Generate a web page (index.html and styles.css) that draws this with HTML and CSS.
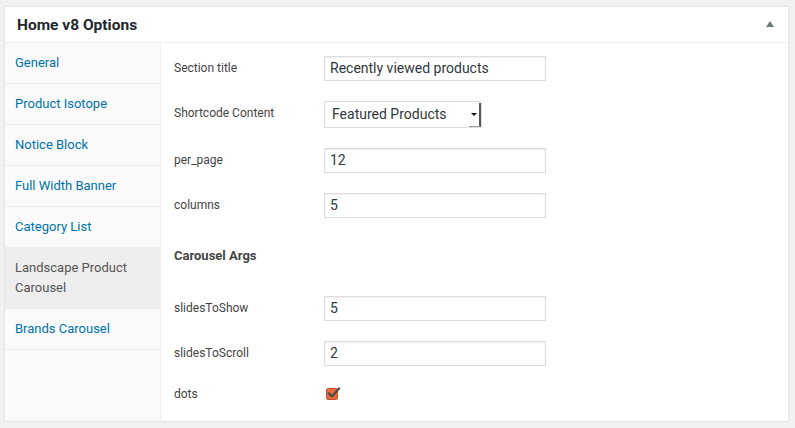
FILE: index.html
```html
<!DOCTYPE html>
<html>
<head>
<meta charset="utf-8">
<link rel="stylesheet" href="styles.css">
</head>
<body>
<div class="panel">
  <div class="panel-head">
    <h2 class="panel-title">Home v8 Options</h2>
    <span class="toggle"></span>
  </div>
  <div class="panel-body">
    <ul class="tabs">
      <li class="tab"><a>General</a></li>
      <li class="tab"><a>Product Isotope</a></li>
      <li class="tab"><a>Notice Block</a></li>
      <li class="tab"><a>Full Width Banner</a></li>
      <li class="tab"><a>Category List</a></li>
      <li class="tab active"><a>Landscape Product Carousel</a></li>
      <li class="tab"><a>Brands Carousel</a></li>
    </ul>
    <div class="fields">
      <div class="row">
        <label class="lbl">Section title</label>
        <div class="input">Recently viewed products</div>
      </div>
      <div class="row">
        <label class="lbl">Shortcode Content</label>
        <div class="select"><span class="sel-text">Featured Products</span><span class="sel-btn"><span class="caret"></span></span></div>
      </div>
      <div class="row">
        <label class="lbl">per_page</label>
        <div class="input">12</div>
      </div>
      <div class="row">
        <label class="lbl">columns</label>
        <div class="input">5</div>
      </div>
      <h3 class="group">Carousel Args</h3>
      <div class="row">
        <label class="lbl">slidesToShow</label>
        <div class="input">5</div>
      </div>
      <div class="row">
        <label class="lbl">slidesToScroll</label>
        <div class="input">2</div>
      </div>
      <div class="row row-check">
        <label class="lbl">dots</label>
        <span class="check">
          <svg width="15" height="14" viewBox="0 0 15 14"><path d="M3 7.5 L6 10.5 L13 2.5" fill="none" stroke="#4a4a4a" stroke-width="2.2" stroke-linecap="square"/></svg>
        </span>
      </div>
    </div>
  </div>
</div>
</body>
</html>
```

FILE: styles.css
```css
html, body {
  margin: 0;
  padding: 0;
  background: #f1f1f1;
  font-family: Roboto, "Liberation Sans", sans-serif;
}
body {
  padding: 6px 6px 0 4px;
}
.panel {
  background: #fff;
  border: 1px solid #e5e5e5;
  box-shadow: 0 1px 1px rgba(0,0,0,.04);
  display: flex;
  flex-direction: column;
  height: 416px;
  box-sizing: border-box;
}
.panel-head {
  height: 35px;
  border-bottom: 1px solid #eee;
  display: flex;
  align-items: center;
  justify-content: space-between;
  padding: 0 14px 0 12px;
}
.panel-title {
  margin: 0;
  font-size: 15.5px;
  font-weight: 700;
  color: #23282d;
  line-height: 20px;
}
.toggle {
  width: 0;
  height: 0;
  border-left: 4px solid transparent;
  border-right: 4px solid transparent;
  border-bottom: 6px solid #72777c;
  margin-top: -2px;
}
.panel-body {
  flex: 1;
  display: flex;
}
.tabs {
  list-style: none;
  margin: 0;
  padding: 0;
  width: 155px;
  background: #fafafa;
  border-right: 1px solid #eee;
}
.tab {
  border-bottom: 1px solid #eee;
  padding: 10px 10px;
  font-size: 13px;
  line-height: 20px;
  color: #0073aa;
}
.tab.active {
  background: #eee;
  color: #555;
}
.fields {
  flex: 1;
  padding: 3px 0 0 13px;
}
.row {
  display: flex;
  align-items: flex-start;
  padding: 10px 0;
}
.lbl {
  width: 150px;
  font-size: 12px;
  color: #444;
  line-height: 16px;
  padding-top: 4px;
}
.input {
  box-sizing: border-box;
  width: 222px;
  height: 25px;
  border: 1px solid #ddd;
  box-shadow: inset 0 1px 2px rgba(0,0,0,.07);
  font-size: 14px;
  color: #32373c;
  line-height: 23px;
  padding: 0 5px;
}
.select {
  box-sizing: border-box;
  width: 158px;
  height: 27px;
  border: 1px solid #ddd;
  display: flex;
  align-items: stretch;
  font-size: 14px;
  color: #32373c;
}
.sel-text {
  flex: 1;
  line-height: 25px;
  padding-left: 7px;
}
.sel-btn {
  width: 10px;
  display: flex;
  align-items: center;
  justify-content: center;
  border-right: 2px solid #5a5a5a;
  border-bottom: 1px solid #9a9a9a;
  margin: 1px 0 0 0;
}
.caret {
  width: 0;
  height: 0;
  border-left: 3px solid transparent;
  border-right: 3px solid transparent;
  border-top: 3px solid #111;
}
.group {
  margin: 18px 0 20px 0;
  font-size: 13px;
  font-weight: 700;
  color: #444;
  line-height: 20px;
}
.row-check {
  align-items: center;
  padding-top: 10px;
}
.row-check .lbl {
  padding-top: 0;
}
.check {
  position: relative;
  width: 12px;
  height: 12px;
  box-sizing: border-box;
  background: #e8693d;
  border: 1px solid #c4552e;
  border-radius: 2px;
  margin-left: 2px;
}
.check svg {
  position: absolute;
  left: -1px;
  top: -3px;
}
```
